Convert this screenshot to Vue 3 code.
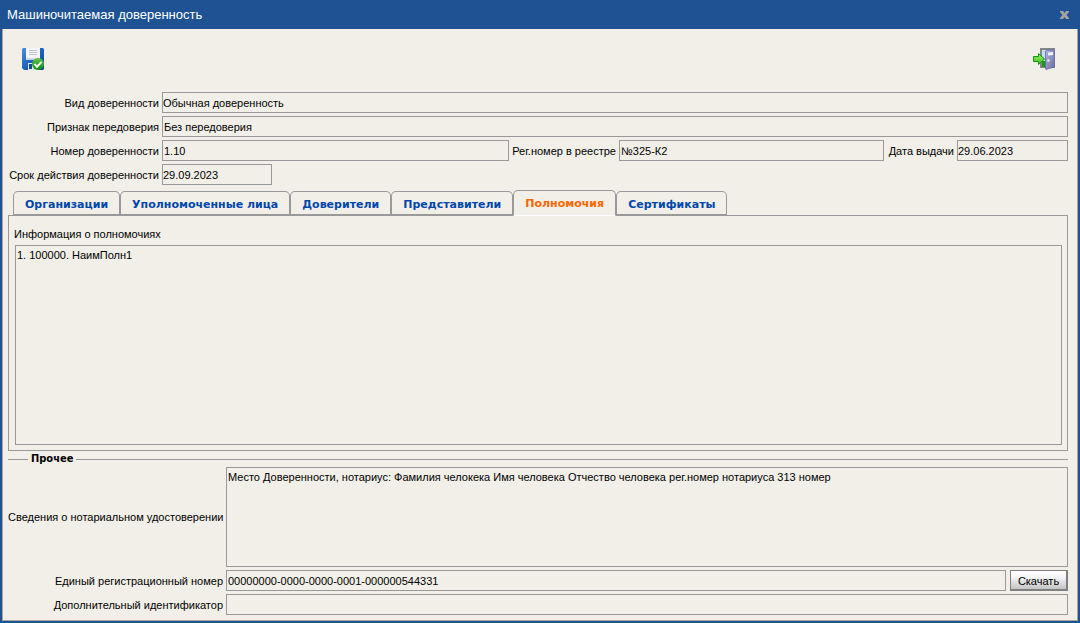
<script setup>
import { ref } from 'vue'

const tabs = [
  'Организации',
  'Уполномоченные лица',
  'Доверители',
  'Представители',
  'Полномочия',
  'Сертификаты',
]
const activeTab = ref('Полномочия')

const form = ref({
  kind: 'Обычная доверенность',
  redelegation: 'Без передоверия',
  number: '1.10',
  registry: '№325-К2',
  issued: '29.06.2023',
  expires: '29.09.2023',
  powers: '1. 100000. НаимПолн1',
  notary:
    'Место Доверенности, нотариус: Фамилия челокека Имя человека Отчество человека рег.номер нотариуса 313 номер',
  regNumber: '00000000-0000-0000-0001-000000544331',
  extraId: '',
})
</script>

<template>
  <div class="window">
    <header class="titlebar">
      <h1 class="title">Машиночитаемая доверенность</h1>
      <button class="close" type="button" aria-label="Закрыть">
        <svg width="9" height="8" viewBox="0 0 9 8">
          <path d="M0 0h3l1.500 2L6 0h3v1L6.500 4 9 7v1H6L4.500 6 3 8H0V7l2.500-3L0 1z" fill="#a3a39f" />
        </svg>
      </button>
    </header>

    <main class="body">
      <div class="toolbar">
        <button class="tool" type="button" aria-label="Сохранить">
          <svg width="22" height="22" viewBox="0 0 22 22">
            <defs>
              <linearGradient id="disk" x1="0" y1="0" x2="1" y2="1">
                <stop offset="0" stop-color="#4d8fd8" />
                <stop offset=".5" stop-color="#1c63bd" />
                <stop offset="1" stop-color="#0d4596" />
              </linearGradient>
              <linearGradient id="ok" x1="0" y1="0" x2="0" y2="1">
                <stop offset="0" stop-color="#5cc64a" />
                <stop offset="1" stop-color="#0a8c10" />
              </linearGradient>
            </defs>
            <path d="M1 0h20l1 1v20l-1 1H2l-2-2V1z" fill="url(#disk)" />
            <path d="M4 0h14v11H4z" fill="#f4f4f4" />
            <path d="M4 10h14v2H4z" fill="#cfd6e0" />
            <path d="M7 2h8v1H7zM7 4h8v1H7zM7 6h8v1H7z" fill="#c2c4c8" />
            <path d="M6 15h11v7H6z" fill="#dfe6ef" />
            <path d="M7 16h3v5H7z" fill="#154a92" />
            <circle cx="16" cy="16" r="6" fill="url(#ok)" />
            <path d="M12.500 16l2.500 2.800 4.500-5" fill="none" stroke="#fff" stroke-width="2" />
          </svg>
        </button>
        <button class="tool" type="button" aria-label="Выход">
          <svg width="22" height="22" viewBox="0 0 22 22">
            <defs>
              <linearGradient id="door" x1="0" y1="0" x2="1" y2="1">
                <stop offset="0" stop-color="#b3b3dc" />
                <stop offset="1" stop-color="#6c6ca8" />
              </linearGradient>
              <linearGradient id="arrow" x1="0" y1="0" x2="0" y2="1">
                <stop offset="0" stop-color="#9cf06a" />
                <stop offset="1" stop-color="#3fc41c" />
              </linearGradient>
            </defs>
            <path d="M7 0h15v20H7z" fill="#85858a" />
            <path d="M9 2h11v17H9z" fill="#bfe0fb" />
            <path d="M9 13h4v6H9z" fill="#1c9a14" />
            <path d="M12.500 3L14 2h7.500v17L13 21.500l-.5-.5z" fill="url(#door)" stroke="#6868a0" stroke-width=".8" />
            <path d="M15 4.500l5-.5v3l-5 .5z" fill="#eef2ff" />
            <circle cx="15.500" cy="12.500" r="1.300" fill="#e8e8f4" />
            <path d="M.5 8.500h5v-3l6 5.500-6 5.500v-3h-5z" fill="url(#arrow)" stroke="#159212" />
          </svg>
        </button>
      </div>

      <section class="fields">
        <div class="row">
          <label for="kind">Вид доверенности</label>
          <input id="kind" v-model="form.kind" class="flush" type="text" readonly />
        </div>
        <div class="row">
          <label for="redelegation">Признак передоверия</label>
          <input id="redelegation" v-model="form.redelegation" type="text" readonly />
        </div>
        <div class="row row-number">
          <label for="number">Номер доверенности</label>
          <input id="number" v-model="form.number" type="text" readonly />
          <label for="registry">Рег.номер в реестре</label>
          <input id="registry" v-model="form.registry" type="text" readonly />
          <label for="issued">Дата выдачи</label>
          <input id="issued" v-model="form.issued" class="flush" type="text" readonly />
        </div>
        <div class="row row-date">
          <label for="expires">Срок действия доверенности</label>
          <input id="expires" v-model="form.expires" class="flush" type="text" readonly />
        </div>
      </section>

      <nav class="tabs" role="tablist">
        <button
          v-for="tab in tabs"
          :key="tab"
          type="button"
          role="tab"
          class="tab"
          :class="{ active: tab === activeTab }"
          :aria-selected="tab === activeTab"
          @click="activeTab = tab"
        >
          {{ tab }}
        </button>
      </nav>

      <section class="panel">
        <label for="powers">Информация о полномочиях</label>
        <textarea id="powers" v-model="form.powers" readonly></textarea>
      </section>

      <section class="other">
        <h2 class="legend">Прочее</h2>
        <div class="row row-other">
          <label for="notary">Сведения о нотариальном удостоверении</label>
          <textarea id="notary" v-model="form.notary" class="notary" readonly></textarea>
        </div>
        <div class="row row-other row-download">
          <label for="reg-number">Единый регистрационный номер</label>
          <input id="reg-number" v-model="form.regNumber" type="text" readonly />
          <button class="download" type="button">Скачать</button>
        </div>
        <div class="row row-other">
          <label for="extra-id">Дополнительный идентификатор</label>
          <input id="extra-id" v-model="form.extraId" type="text" readonly />
        </div>
      </section>
    </main>
  </div>
</template>

<style>
body {
  margin: 0;
}
</style>

<style scoped>
.window {
  box-sizing: border-box;
  min-height: 100vh;
  display: flex;
  flex-direction: column;
  padding: 0 2px 2px;
  background: #1e5292;
  color: #000;
  font-family: Tahoma, 'Liberation Sans', sans-serif;
  font-size: 11px;
  line-height: 14px;
}

.window * {
  box-sizing: border-box;
}

button,
input,
textarea {
  margin: 0;
  font: inherit;
  color: inherit;
}

.titlebar {
  display: flex;
  align-items: center;
  justify-content: space-between;
  height: 29px;
  padding: 0 9px 0 5px;
}

.title {
  margin: 0;
  color: #fff;
  font-size: 13px;
  font-weight: normal;
  line-height: 16px;
}

.close,
.tool {
  display: flex;
  padding: 0;
  border: 0;
  background: none;
}

.body {
  flex: 1;
  display: flex;
  flex-direction: column;
  padding: 0 9px 5px 5px;
  border: 1px solid #a9a59c;
  border-top: 0;
  background: #f2efe8;
}

.toolbar {
  display: flex;
  justify-content: space-between;
  padding: 19px 13px 22px 14px;
}

.fields {
  display: grid;
  gap: 3px;
}

.row {
  display: grid;
  grid-template-columns: 154px 1fr;
  align-items: center;
}

.row label {
  padding-right: 3px;
  text-align: right;
  white-space: nowrap;
}

.row-number {
  grid-template-columns: 154px 347fr 110px 265fr 73px 111px;
}

.row-date {
  grid-template-columns: 154px 110px;
}

input,
textarea {
  display: block;
  width: 100%;
  min-width: 0;
  border: 1px solid #999;
  border-radius: 0;
  background: transparent;
  outline: 0;
}

input {
  height: 21px;
  padding: 1px 1px 0;
}

input.flush {
  padding: 1px 0 0;
}

textarea {
  padding: 2px 1px;
  resize: none;
}

.tabs {
  display: flex;
  align-items: flex-end;
  height: 26px;
  margin-top: 5px;
  padding-left: 5px;
}

.tab {
  height: 25px;
  padding: 3px 11px 0;
  border: 1px solid #999;
  border-bottom-width: 2px;
  border-radius: 5px 5px 0 0;
  background: #f2efe8;
  color: #0047ab;
  font-family: Verdana, 'DejaVu Sans', sans-serif;
  font-size: 11px;
  font-weight: bold;
  white-space: nowrap;
}

.tab.active {
  z-index: 1;
  height: 26px;
  padding-bottom: 1px;
  border-bottom: 1px solid #fff;
  color: #f60;
}

.panel {
  flex: 1;
  display: flex;
  flex-direction: column;
  gap: 4px;
  margin-top: -1px;
  padding: 11px 5px 5px;
  border: 1px solid #999;
}

.panel textarea {
  flex: 1;
  width: auto;
  margin-left: 1px;
}

.other {
  display: grid;
  gap: 3px;
}

.legend {
  display: flex;
  align-items: center;
  gap: 3px;
  height: 16px;
  margin: 0 0 -3px;
  font-family: Verdana, 'DejaVu Sans Condensed', sans-serif;
  font-size: 11px;
  line-height: 14px;
}

.legend::before,
.legend::after {
  content: '';
  width: 20px;
  height: 1px;
  background: #999;
}

.legend::after {
  flex: 1;
}

.row-other {
  grid-template-columns: 218px 1fr;
}

.row-download {
  grid-template-columns: 218px 1fr 58px;
}

.row-download input {
  width: auto;
  margin-right: 4px;
}

.notary {
  height: 100px;
}

.download {
  height: 21px;
  padding: 1px 0 0;
  border: 1px solid #808080;
  border-right-width: 2px;
  border-bottom-width: 2px;
  background: linear-gradient(#fff, #f4f4f4 35%, #c4c4c4);
}
</style>
